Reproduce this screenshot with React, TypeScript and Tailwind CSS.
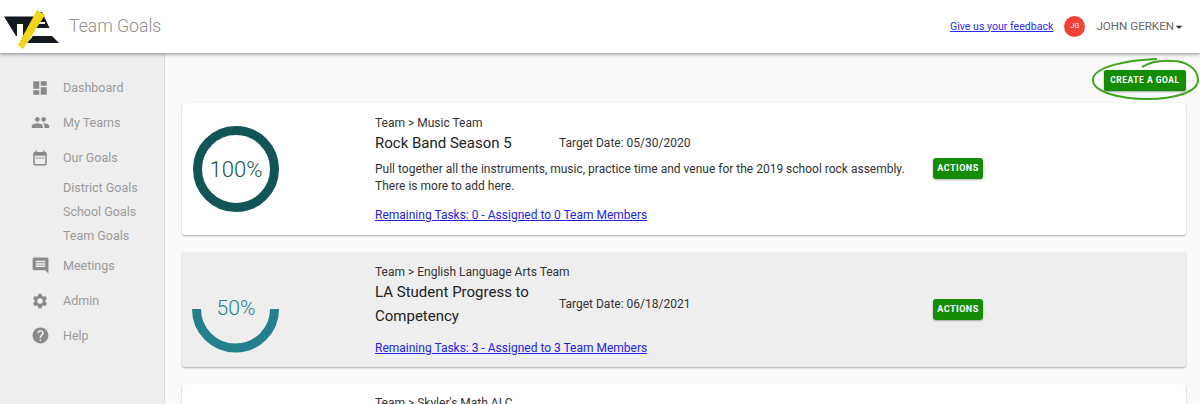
import type { ReactNode } from "react";
import { MdDashboard, MdPeople, MdDateRange, MdInsertComment, MdSettings, MdHelp, MdArrowDropDown } from "react-icons/md";

const Nav = ({ icon, label }: { icon: ReactNode; label: string }) => (
  <div className="flex h-[35px] items-center">
    <div className="flex w-[63px] justify-center pl-[17px] text-[#8a8a8a]">{icon}</div>
    <span className="mt-[2px]">{label}</span>
  </div>
);

const Sub = ({ label }: { label: string }) => <div className="flex h-6 items-center pl-[63px]">{label}</div>;

function Ring({ pct }: { pct: 100 | 50 }) {
  if (pct === 100) {
    return (
      <div className="relative h-[88px] w-[88px]">
        <svg width="88" height="88" viewBox="0 0 88 88">
          <circle cx="44" cy="44" r="38.5" fill="none" stroke="#125556" strokeWidth="9" />
        </svg>
        <span className="absolute inset-0 flex items-center justify-center text-[22px] font-light text-[#125556]">100%</span>
      </div>
    );
  }
  return (
    <div className="relative h-[88px] w-[88px]">
      <svg width="88" height="88" viewBox="0 0 88 88">
        <path d="M4.5 44 A39 39 0 0 0 82.5 44" fill="none" stroke="#24808c" strokeWidth="9" />
      </svg>
      <span className="absolute inset-x-0 top-[31px] text-center text-[21px] leading-6 font-light text-[#24808c]">50%</span>
    </div>
  );
}

const Actions = () => (
  <button className="h-[21px] w-[50px] rounded-[3px] bg-[#158c06] text-[9px] font-bold tracking-[0.5px] text-white shadow-[0_1px_2px_rgba(0,0,0,0.3)]">ACTIONS</button>
);

export default function App() {
  return (
    <div className="flex h-[404px] w-[1200px] flex-col overflow-hidden bg-[#fafafa] font-['Roboto',sans-serif]">
      <header className="relative z-10 flex h-[53px] shrink-0 items-center justify-between bg-white pr-[13px] shadow-[0_1px_4px_rgba(0,0,0,0.45)]">
        <div className="flex items-center">
          <svg width="60" height="46" viewBox="0 0 60 46">
            <path d="M4 12.5 H36 L25 34 L23 34 V20 H17 V32 H16 Z" fill="#141821" />
            <path d="M29 24 L38 8 L42 8 L49.5 24 Z" fill="#141821" />
            <path d="M38 18 H45 V20 H38 Z" fill="#ffffff" />
            <path d="M33 32 H52 L59 39 H27 Z" fill="#141821" />
            <path d="M37 6 L45 11 L23 45 L18 41 Z" fill="#f4d418" />
          </svg>
          <span className="ml-[9px] text-[17.6px] font-light text-[#8f8f8f]">Team Goals</span>
        </div>
        <div className="flex items-center">
          <a href="#" className="text-[10.6px] text-[#2b2bee] underline">Give us your feedback</a>
          <span className="mx-[11px] flex h-[21px] w-[21px] items-center justify-center rounded-full bg-[#f44336] text-[7px] text-white">JG</span>
          <span className="text-[11.6px] text-[#666]">JOHN GERKEN</span>
          <MdArrowDropDown className="ml-[-3px] text-[#333]" size={16} />
        </div>
      </header>
      <div className="flex min-h-0 flex-1">
        <aside className="w-[165px] shrink-0 border-r border-[#d9d9d9] bg-[#eeeeee] pt-[17px] text-[12.5px] text-[#9a9a9a]">
          <Nav icon={<MdDashboard size={18} />} label="Dashboard" />
          <Nav icon={<MdPeople size={19} />} label="My Teams" />
          <Nav icon={<MdDateRange size={18} />} label="Our Goals" />
          <div className="flex flex-col pt-[1px]">
            <Sub label="District Goals" />
            <Sub label="School Goals" />
            <Sub label="Team Goals" />
          </div>
          <Nav icon={<MdInsertComment size={19} />} label="Meetings" />
          <Nav icon={<MdSettings size={18} />} label="Admin" />
          <Nav icon={<MdHelp size={19} />} label="Help" />
        </aside>
        <main className="relative min-w-0 flex-1 pt-[17px] pr-[14px] pl-[17px]">
          <div className="flex justify-end">
            <button className="h-[21px] w-[82px] rounded-[2px] bg-[#158c06] text-[8.5px] font-bold tracking-[0.5px] text-white shadow-[0_1px_2px_rgba(0,0,0,0.35)]">CREATE A GOAL</button>
          </div>
          <svg width="110" height="46" viewBox="0 0 110 46" className="absolute top-[4px] right-0">
            <path d="M67 2 C40 3 3 9 3 23 C3 35 30 42 57 42 C85 42 108 35 108 23 C108 11 95 4 83 4 C72 3 60 5 52 10" fill="none" stroke="#3fa31e" strokeWidth="2" />
          </svg>
          <div className="mt-3 flex h-[132px] items-start rounded-[3px] bg-white shadow-[0_1px_2px_rgba(0,0,0,0.3)]">
            <div className="mt-[22px] ml-[10px] w-[183px] shrink-0"><Ring pct={100} /></div>
            <div className="w-[558px] shrink-0 pt-[12px] text-[#333]">
              <div className="text-[12px] leading-4">Team &gt; Music Team</div>
              <div className="flex items-center">
                <span className="w-[184px] text-[15px] leading-6 text-[#222]">Rock Band Season 5</span>
                <span className="text-[12px]">Target Date: 05/30/2020</span>
              </div>
              <p className="mt-[6px] text-[12px] leading-[17px]">Pull together all the instruments, music, practice time and venue for the 2019 school rock assembly.<br />There is more to add here.</p>
              <a href="#" className="mt-[12px] block text-[12px] leading-4 text-[#2323e0] underline">Remaining Tasks: 0 - Assigned to 0 Team Members</a>
            </div>
            <div className="mt-[55px] flex"><Actions /></div>
          </div>
          <div className="mt-[17px] flex h-[115px] items-start rounded-[3px] bg-[#eeeeee] shadow-[0_1px_2px_rgba(0,0,0,0.3)]">
            <div className="mt-[13px] ml-[10px] w-[183px] shrink-0"><Ring pct={50} /></div>
            <div className="w-[558px] shrink-0 pt-[12px] text-[#333]">
              <div className="text-[12px] leading-4">Team &gt; English Language Arts Team</div>
              <div className="flex items-center">
                <span className="w-[184px] pr-[20px] text-[15px] leading-6 text-[#222]">LA Student Progress to Competency</span>
                <span className="text-[12px]">Target Date: 06/18/2021</span>
              </div>
              <a href="#" className="mt-[12px] block text-[12px] leading-4 text-[#2323e0] underline">Remaining Tasks: 3 - Assigned to 3 Team Members</a>
            </div>
            <div className="mt-[47px] flex"><Actions /></div>
          </div>
          <div className="mt-[17px] h-[60px] rounded-[3px] bg-white pt-[11px] pl-[193px] text-[12px] leading-4 text-[#333] shadow-[0_1px_2px_rgba(0,0,0,0.3)]">Team &gt; Skyler's Math ALC</div>
        </main>
      </div>
    </div>
  );
}
